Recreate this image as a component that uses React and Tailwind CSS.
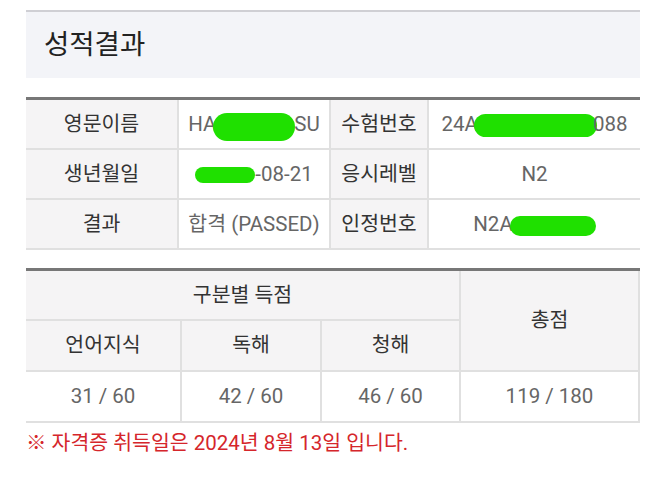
import React from "react";

const FONT = { fontFamily: "Roboto, 'Noto Sans CJK KR', 'Noto Sans', sans-serif" };

function Blob({ className }) {
  return <span className={"inline-block rounded-full bg-[#1fe000] align-middle " + className} />;
}

function Label({ children, className = "" }) {
  return (
    <div className={"flex items-center justify-center bg-[#f5f4f5] text-[#333] text-[20.5px] " + className}>
      {children}
    </div>
  );
}

function Value({ children, className = "" }) {
  return (
    <div className={"flex items-center justify-center bg-white text-[#666] text-[20.5px] " + className}>
      {children}
    </div>
  );
}

export default function App() {
  return (
    <div className="w-[666px] h-[481px] bg-white px-[26px] pt-[10px]" style={FONT}>
      <div className="h-[68px] border-t-[2px] border-[#cfcfd4] bg-[#f3f4f8] flex items-center pl-[18px] text-[27.5px] text-[#222]">
        성적결과
      </div>

      <div className="mt-[19px] border-t-[3px] border-[#777] grid grid-cols-[153px_152px_98px_211px] grid-rows-[50px_50px_50px]">
        <Label className="border-b-2 border-r-2 border-[#e0e0e0]">영문이름</Label>
        <Value className="border-b-2 border-r-2 border-[#e0e0e0]">
          <span>HA</span>
          <Blob className="w-[82px] h-[28px] mt-[6px] -ml-[3px] -mr-[1px]" />
          <span>SU</span>
        </Value>
        <Label className="border-b-2 border-r-2 border-[#e0e0e0]">수험번호</Label>
        <Value className="border-b-2 border-[#e0e0e0]">
          <span>24A</span>
          <Blob className="w-[123px] h-[23px] mt-[3px] -ml-[4px] -mr-[4px]" />
          <span>088</span>
        </Value>

        <Label className="border-b-2 border-r-2 border-[#e0e0e0]">생년월일</Label>
        <Value className="border-b-2 border-r-2 border-[#e0e0e0]">
          <Blob className="w-[60px] h-[16px] mt-[2px]" />
          <span>-08-21</span>
        </Value>
        <Label className="border-b-2 border-r-2 border-[#e0e0e0]">응시레벨</Label>
        <Value className="border-b-2 border-[#e0e0e0]">N2</Value>

        <Label className="border-b-2 border-r-2 border-[#e0e0e0]">결과</Label>
        <Value className="border-b-2 border-r-2 border-[#e0e0e0]">합격 (PASSED)</Value>
        <Label className="border-b-2 border-r-2 border-[#e0e0e0]">인정번호</Label>
        <Value className="border-b-2 border-[#e0e0e0]">
          <span>N2A</span>
          <Blob className="w-[86px] h-[20px] mt-[3px] -ml-[3px]" />
        </Value>
      </div>

      <div className="mt-[18px] border-t-[3px] border-[#777] grid grid-cols-[156px_140px_139px_179px] grid-rows-[50px_51px_51px]">
        <Label className="col-span-3 border-b-2 border-r-2 border-[#e0e0e0]">구분별 득점</Label>
        <Label className="row-span-2 border-b-2 border-r-2 border-[#e0e0e0]">총점</Label>
        <Label className="border-b-2 border-r-2 border-[#e0e0e0]">언어지식</Label>
        <Label className="border-b-2 border-r-2 border-[#e0e0e0]">독해</Label>
        <Label className="border-b-2 border-r-2 border-[#e0e0e0]">청해</Label>
        <Value className="border-b-2 border-r-2 border-[#e0e0e0]">31 / 60</Value>
        <Value className="border-b-2 border-r-2 border-[#e0e0e0]">42 / 60</Value>
        <Value className="border-b-2 border-r-2 border-[#e0e0e0]">46 / 60</Value>
        <Value className="border-b-2 border-r-2 border-[#e0e0e0]">119 / 180</Value>
      </div>

      <div className="mt-[6px] leading-[28px] text-[20.5px] text-[#d5262b]">
        ※ 자격증 취득일은 2024년 8월 13일 입니다.
      </div>
    </div>
  );
}
